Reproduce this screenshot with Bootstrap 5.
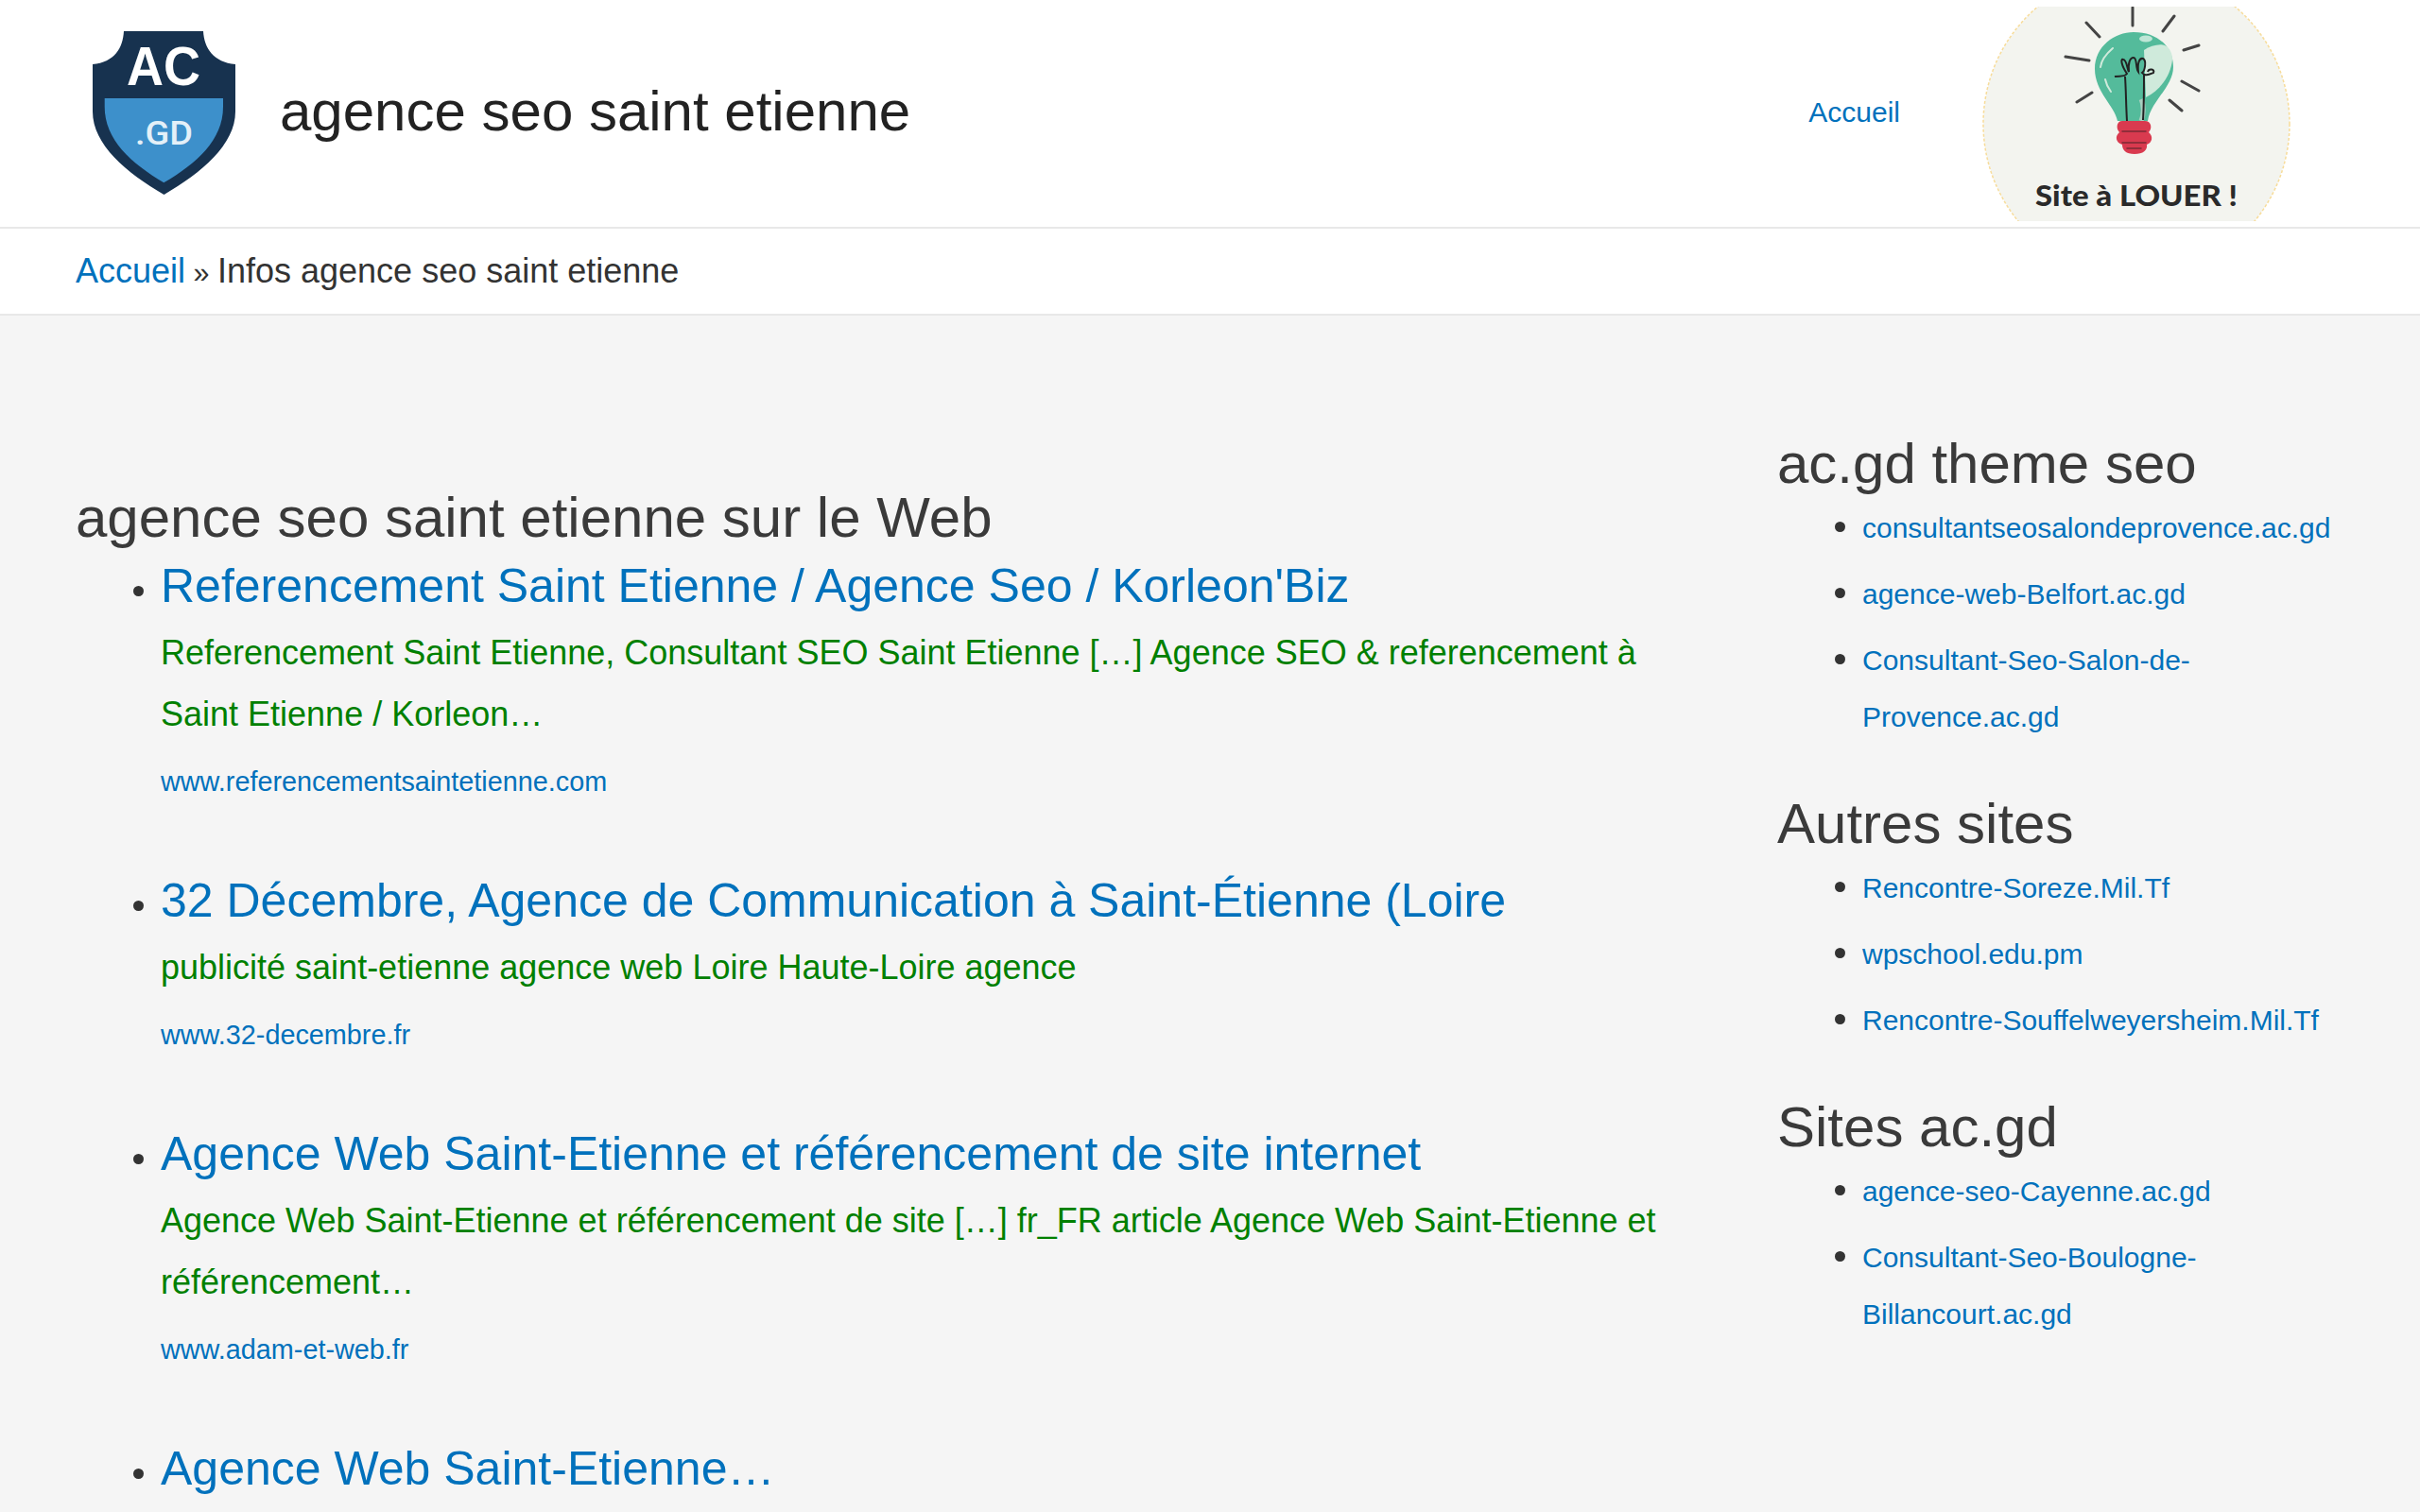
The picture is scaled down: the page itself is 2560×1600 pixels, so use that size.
<!DOCTYPE html>
<html lang="fr">

<head>
    <meta charset="UTF-8">
    <meta name="viewport" content="width=device-width, initial-scale=1.0">
    <title>agence seo saint etienne</title>
    <link href="https://cdn.jsdelivr.net/npm/bootstrap@5.3.2/dist/css/bootstrap.min.css" rel="stylesheet">
    <script src="https://cdn.jsdelivr.net/npm/bootstrap@5.3.2/dist/js/bootstrap.bundle.min.js"></script>
    <style>
        body { font-family: "Liberation Sans", Arial, sans-serif; background: #f5f5f5; color: #333; }
        a { color: #0071bc; text-decoration: none; }
        .site-top { height: 242px; background: #fff; border-bottom: 2px solid #e8e8e8; padding-left: 98px; }
        .site-title { font-size: 60px; font-weight: 400; color: #222; margin: -5px 0 0 47px; line-height: 1.2; }
        .top-link { font-size: 30px; margin-right: 87px; margin-top: -4px; }
        .top-pic { margin-right: 137px; }
        .logo-big { font-family: "Liberation Sans", sans-serif; }
        .logo-small { font-family: Roboto, sans-serif; }
        .pic-text { font-family: Lato, sans-serif; }
        .crumb-bar { height: 92px; background: #fff; border-bottom: 2px solid #e8e8e8; padding-left: 80px; font-size: 36px; }
        .crumb-sep { font-size: 30.500px; }
        .page-body { padding: 0 80px; }
        .main-col { width: 1800px; padding: 177px 70px 0 0; }
        .side-col { width: 600px; padding-top: 120px; }
        .sec-title { font-size: 60px; font-weight: 400; color: #3a3a3a; line-height: 73px; margin: 0; }
        .res-list { padding-left: 90px; margin: 0; font-size: 36px; }
        .res-item { margin-bottom: 57px; }
        .res-link { display: block; font-size: 50px; line-height: 72px; margin-bottom: 2px; }
        .res-text { font-size: 36px; line-height: 65px; color: #008000; margin: 0; }
        .res-url { display: block; font-size: 28.800px; line-height: 65px; margin-top: 7px; }
        .side-list { padding-left: 90px; margin: 0 0 46px; }
        .side-list li { margin-bottom: 8px; font-size: 30px; line-height: 60px; }
        .side-list li::marker { font-size: 36px; }
    </style>
</head>

<body>
    <!-- En-tête -->
    <header class="site-top d-flex align-items-center">
        <svg width="151" height="174" viewBox="0 0 151 174">
            <path d="M33 0H117C118 18 128 33 151 35V85C151 120 115 150 75.500 173C36 150 0 120 0 85V35C23 33 32 18 33 0Z" fill="#17324f"/>
            <path d="M12.700 71H138V80C138 115 110 140 75.300 160.300C41 140 12.700 115 12.700 80Z" fill="#3d90cb"/>
            <text class="logo-big" x="36" y="57" font-size="58" font-weight="700" fill="#fff" textLength="78" lengthAdjust="spacingAndGlyphs">AC</text>
            <text class="logo-small" x="45" y="120" font-size="35" font-weight="500" fill="#e4f0f8" textLength="61" lengthAdjust="spacingAndGlyphs">.GD</text>
        </svg>
        <div class="site-title">agence seo saint etienne</div>
        <a class="top-link ms-auto" href="#">Accueil</a>
        <svg class="top-pic" width="326" height="227" viewBox="0 0 326 227">
            <circle cx="163" cy="124" r="162" fill="#f3f4ef" stroke="#f7dc9a" stroke-width="1.500" stroke-dasharray="3 2"/>
            <path d="M143 121C140 105 119 90 119 66C119 42 140 27 160 27C185 27 202 42 202 64C202 85 178 100 175 121Z" fill="#54bb9b"/>
            <path d="M171 46C178 41 188 39 193 41C199 44 201 50 201 56C200 70 190 88 173 96Z" fill="#cfeadb"/>
            <path d="M168 98C171 104 171 114 168 121" stroke="#a8cfc0" stroke-width="5" fill="none"/>
            <ellipse cx="173" cy="34" rx="7" ry="3.500" fill="#bfe6d6"/>
            <path d="M138 44C131 50 126 56 125 64M130 77C131 82 133 86 136 90" stroke="#cfeadb" stroke-width="2" fill="none" stroke-linecap="round"/>
            <path d="M159 1V20M203 10L191 26M229 41L213 46M229 89L211 79M211 110L198 99M116 91L100 101M88 53L113 57M110 17L124 32" stroke="#444" stroke-width="3" stroke-linecap="round"/>
            <path d="M153 121C152 105 152 88 151 74M170 120C171 105 171 88 171 72M140 74C145 73 150 75 153 71C147 62 146 55 149 56C153 56 153 66 155 69C154 60 156 54 160 54C164 54 162 65 165 69C164 60 166 54 170 55C174 57 172 68 169 70C172 74 176 72 181 70C183 66 176 65 175 69" stroke="#222" stroke-width="2" fill="none"/>
            <path d="M148 121H172C179 121 180 129 176 133C181 137 180 144 174 146C175 152 170 156 161 156C152 156 148 152 148 146C141 144 140 137 145 133C141 129 142 121 148 121Z" fill="#d93a4f"/>
            <path d="M148 132H173M148 144H173M153 150H168" stroke="#7a2a35" stroke-width="1.500" fill="none" stroke-linecap="round"/>
            <text class="pic-text" x="56" y="211" font-size="31" font-weight="900" fill="#2a2a2a" textLength="214" lengthAdjust="spacingAndGlyphs">Site à LOUER !</text>
        </svg>
    </header>

    <!-- Fil d'Ariane -->
    <nav class="crumb-bar d-flex align-items-center">
        <span><a href="#">Accueil</a><span class="crumb-sep"> » </span>Infos agence seo saint etienne</span>
    </nav>

    <div class="page-body d-flex">
        <main class="main-col">
            <h2 class="sec-title">agence seo saint etienne sur le Web</h2>
            <ul class="res-list">
                <li class="res-item">
                    <a class="res-link" href="#">Referencement Saint Etienne / Agence Seo / Korleon'Biz</a>
                    <p class="res-text">Referencement Saint Etienne, Consultant SEO Saint Etienne […] Agence SEO &amp; referencement à Saint Etienne / Korleon…</p>
                    <a class="res-url" href="#">www.referencementsaintetienne.com</a>
                </li>
                <li class="res-item">
                    <a class="res-link" href="#">32 Décembre, Agence de Communication à Saint-Étienne (Loire</a>
                    <p class="res-text">publicité saint-etienne agence web Loire Haute-Loire agence</p>
                    <a class="res-url" href="#">www.32-decembre.fr</a>
                </li>
                <li class="res-item">
                    <a class="res-link" href="#">Agence Web Saint-Etienne et référencement de site internet</a>
                    <p class="res-text">Agence Web Saint-Etienne et référencement de site […] fr_FR article Agence Web Saint-Etienne et référencement…</p>
                    <a class="res-url" href="#">www.adam-et-web.fr</a>
                </li>
                <li class="res-item">
                    <a class="res-link" href="#">Agence Web Saint-Etienne…</a>
                </li>
            </ul>
        </main>

        <aside class="side-col">
            <h2 class="sec-title">ac.gd theme seo</h2>
            <ul class="side-list">
                <li><a href="#">consultantseosalondeprovence.ac.gd</a></li>
                <li><a href="#">agence-web-Belfort.ac.gd</a></li>
                <li><a href="#">Consultant-Seo-Salon-de-Provence.ac.gd</a></li>
            </ul>
            <h2 class="sec-title">Autres sites</h2>
            <ul class="side-list">
                <li><a href="#">Rencontre-Soreze.Mil.Tf</a></li>
                <li><a href="#">wpschool.edu.pm</a></li>
                <li><a href="#">Rencontre-Souffelweyersheim.Mil.Tf</a></li>
            </ul>
            <h2 class="sec-title">Sites ac.gd</h2>
            <ul class="side-list">
                <li><a href="#">agence-seo-Cayenne.ac.gd</a></li>
                <li><a href="#">Consultant-Seo-Boulogne-Billancourt.ac.gd</a></li>
            </ul>
        </aside>
    </div>
</body>

</html>
